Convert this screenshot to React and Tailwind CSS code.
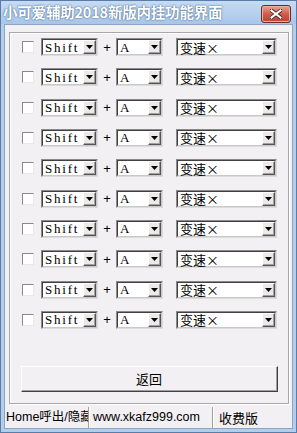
import React from "react";

const rows = Array.from({ length: 10 });

function Arrow() {
  return (
    <div className="w-[13px] h-[14px] flex items-center justify-center bg-[#ece9e8] border-t border-l border-t-white border-l-white border-b border-r border-b-[#555] border-r-[#555] shadow-[inset_-1px_-1px_0_#a0a0a0]">
      <svg width="7" height="4" viewBox="0 0 7 4">
        <polygon points="0,0 7,0 3.5,4" fill="#000" />
      </svg>
    </div>
  );
}

function Combo({ w, text, mono }) {
  return (
    <div
      className={`${w} h-[18px] bg-white border-t border-l border-t-[#8a8a8a] border-l-[#8a8a8a] border-b border-r border-b-[#dcdcdc] border-r-[#dcdcdc]`}
    >
      <div className="h-full flex items-center border-t border-l border-t-[#404040] border-l-[#404040] border-b border-r border-b-[#c8c8c8] border-r-[#c8c8c8]">
        <span
          className={`flex-1 pl-[2px] leading-none text-black ${
            mono
              ? "font-['Liberation_Serif',serif] text-[13px] tracking-[1.8px]"
              : "font-['Noto_Sans_CJK_SC',sans-serif] text-[13px]"
          }`}
        >
          {text}
        </span>
        <Arrow />
      </div>
    </div>
  );
}

function Row() {
  return (
    <div className="h-[18px] flex items-center">
      <div className="ml-[1px] w-[12px] h-[12px] bg-white border-t border-l border-t-[#8a8a8a] border-l-[#8a8a8a] border-b border-r border-b-[#e8e8e8] border-r-[#e8e8e8]" />
      <div className="w-[7px]" />
      <Combo w="w-[57px]" text="Shift" mono />
      <span className="w-[18px] text-center font-['Liberation_Sans',sans-serif] text-[13px] leading-none text-black">
        +
      </span>
      <Combo w="w-[47px]" text="A" mono />
      <div className="w-[13px]" />
      <Combo w="w-[101px]" text="变速×" />
    </div>
  );
}

export default function App() {
  return (
    <div className="w-[297px] h-[433px] flex flex-col bg-[#b3cdea] border border-[#5a7ca8] overflow-hidden">
      <div className="h-[23px] flex items-center justify-between pl-[2px] pr-[5px] bg-gradient-to-b from-[#c6dbf2] to-[#a9c6e8]">
        <span className="font-['Noto_Sans_CJK_SC',sans-serif] font-bold text-[14.5px] leading-none text-white tracking-[-0.2px] [text-shadow:0_0_2px_#4a6a94,0_0_1px_#4a6a94]">
          小可爱辅助2018新版内挂功能界面
        </span>
        <div className="w-[30px] h-[18px] mt-[2px] rounded-[3px] border border-[#6b2a2a] bg-gradient-to-b from-[#e4a594] via-[#cf5c4c] to-[#c04030] flex items-center justify-center shadow-[inset_0_0_0_1px_#eab0a0]">
          <svg width="12" height="10" viewBox="0 0 12 10">
            <path d="M1.5 1.5 L10.5 8.5 M10.5 1.5 L1.5 8.5" stroke="#3a1a1a" strokeWidth="3.6" strokeLinecap="square" />
            <path d="M1.5 1.5 L10.5 8.5 M10.5 1.5 L1.5 8.5" stroke="#fff" strokeWidth="2.2" strokeLinecap="square" />
          </svg>
        </div>
      </div>
      <div className="flex-1 mx-[3px] mb-[3px] flex flex-col bg-[#f3f0f3] border border-[#8aa5c8]">
        <div className="ml-[4px] mr-[3px] mt-[7px] h-[372px] border border-[#a8a8a8] shadow-[inset_1px_1px_0_#fff,1px_1px_0_#fff] flex flex-col pl-[11px] pt-[5px]">
          <div className="flex flex-col gap-[12.33px]">
            {rows.map((_, i) => (
              <Row key={i} />
            ))}
          </div>
          <div className="mt-[37px] mr-[10px] h-[26px] border border-t-white border-l-white border-b-[#404040] border-r-[#404040] bg-[#f3f0f3]">
            <div className="h-full flex items-center justify-center border-b border-r border-b-[#a0a0a0] border-r-[#a0a0a0] font-['Noto_Sans_CJK_SC',sans-serif] text-[13px] leading-none text-black">
              返回
            </div>
          </div>
        </div>
        <div className="mt-[3px] flex-1 flex items-center text-[12.5px] leading-none text-black font-['Liberation_Sans','Noto_Sans_CJK_SC',sans-serif]">
          <div className="w-[84px] h-full pl-[1px] flex items-center overflow-hidden whitespace-nowrap border-r border-r-[#a0a0a0]">
            Home呼出/隐藏
          </div>
          <div className="w-[124px] h-full pl-[3px] flex items-center whitespace-nowrap border-l border-l-white border-r border-r-[#a0a0a0]">
            www.xkafz999.com
          </div>
          <div className="flex-1 h-full pl-[5px] flex items-center border-l border-l-white font-['Noto_Sans_CJK_SC',sans-serif] text-[13px]">
            收费版
          </div>
        </div>
      </div>
    </div>
  );
}
